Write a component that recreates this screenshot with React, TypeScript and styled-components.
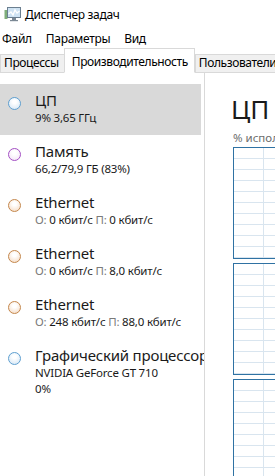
import React from 'react';
import styled, { createGlobalStyle } from 'styled-components';

const GlobalStyle = createGlobalStyle`
  html, body {
    margin: 0;
    padding: 0;
    background: #ffffff;
  }
  body {
    font-family: "Noto Sans", "Open Sans", "DejaVu Sans", sans-serif;
    color: #000;
  }
`;

const Window = styled.div`
  width: 275px;
  height: 476px;
  overflow: hidden;
  display: flex;
  flex-direction: column;
  background: #fff;
`;

const TitleBar = styled.div`
  height: 28px;
  display: flex;
  align-items: center;
  gap: 4px;
  padding-left: 4px;
  font-size: 12px;
  letter-spacing: -0.3px;
  flex-shrink: 0;
`;

const MenuBar = styled.div`
  height: 20px;
  display: flex;
  align-items: center;
  gap: 14px;
  padding-left: 2px;
  font-size: 12px;
  letter-spacing: -0.3px;
  flex-shrink: 0;
`;

const TabStrip = styled.div`
  height: 25px;
  display: flex;
  align-items: flex-end;
  border-bottom: 1px solid #d9d9d9;
  box-sizing: border-box;
  flex-shrink: 0;
  white-space: nowrap;
`;

const Tab = styled.div<{ $active?: boolean }>`
  font-size: 12px;
  letter-spacing: -0.4px;
  line-height: 15px;
  padding: ${({ $active }) => ($active ? '5px 6px 3px 7px' : '0 5px 2px 3px')};
  background: ${({ $active }) => ($active ? '#ffffff' : '#f0f0f0')};
  border: 1px solid #d9d9d9;
  border-bottom: ${({ $active }) => ($active ? '1px solid #ffffff' : 'none')};
  margin-bottom: ${({ $active }) => ($active ? '-1px' : '0')};
  margin-right: ${({ $active }) => ($active ? '0' : '-1px')};
  position: relative;
  z-index: ${({ $active }) => ($active ? 1 : 0)};
`;

const Body = styled.div`
  flex: 1;
  display: flex;
  min-height: 0;
`;

const Sidebar = styled.div`
  width: 205px;
  flex-shrink: 0;
  box-sizing: border-box;
  padding: 11px 3px 0 0;
  border-right: 1px solid #d9d9d9;
  display: flex;
  flex-direction: column;
  overflow: hidden;
`;

const Item = styled.div<{ $selected?: boolean }>`
  height: 51px;
  display: flex;
  align-items: flex-start;
  background: ${({ $selected }) => ($selected ? '#d9d9d9' : 'transparent')};
  box-sizing: border-box;
  padding: 6px 0 0 8px;
  flex-shrink: 0;
`;

const Dot = styled.div<{ $ring: string; $fill: string }>`
  width: 13px;
  height: 13px;
  border-radius: 50%;
  box-sizing: border-box;
  border: 1.5px solid ${({ $ring }) => $ring};
  background: radial-gradient(circle at 50% 35%, #ffffff 20%, ${({ $fill }) => $fill} 100%);
  margin-top: 7px;
  flex-shrink: 0;
`;

const ItemText = styled.div`
  margin-left: 14px;
  display: flex;
  flex-direction: column;
  white-space: nowrap;
`;

const ItemTitle = styled.div`
  font-size: 15px;
  letter-spacing: -0.2px;
  line-height: 20px;
  color: #1a1a1a;
`;

const ItemSub = styled.div`
  font-size: 11.5px;
  letter-spacing: -0.2px;
  line-height: 16px;
  color: #1a1a1a;
`;

const Label = styled.span`
  color: #7a7a7a;
`;

const Detail = styled.div`
  flex: 1;
  min-width: 0;
  overflow: hidden;
  padding-left: 26px;
  display: flex;
  flex-direction: column;
  white-space: nowrap;
`;

const Heading = styled.div`
  font-size: 26px;
  line-height: 32px;
  margin-top: 20px;
  color: #1a1a1a;
`;

const Caption = styled.div`
  font-size: 11.5px;
  line-height: 14px;
  color: #6d6d6d;
  margin: 6px 0 0 2px;
`;

const Graphs = styled.div`
  display: flex;
  flex-direction: column;
  gap: 4px;
  margin: 2px 0 0 2px;
`;

const Graph = styled.div`
  width: 240px;
  height: 112px;
  box-sizing: border-box;
  border: 1px solid #2f72a3;
  flex-shrink: 0;
  background-color: #fff;
  background-image:
    repeating-linear-gradient(to bottom, transparent 0 10px, #d9e5ef 10px 11px),
    repeating-linear-gradient(to right, transparent 0 29px, #d9e5ef 29px 30px);
`;

const AppIcon = () => (
  <svg width="17" height="16" viewBox="0 0 17 16">
    <rect x="0.5" y="4" width="3" height="9" fill="#7fae7a" />
    <rect x="3.5" y="1.5" width="13" height="10" fill="#cfe3f3" stroke="#6b7f90" />
    <polyline points="4.5,8 7,6 9,9 11,4 13,7 15.5,5" fill="none" stroke="#ffffff" strokeWidth="1.3" />
    <rect x="8" y="12" width="4" height="2" fill="#7b8894" />
    <rect x="6" y="14" width="8" height="1.2" fill="#7b8894" />
  </svg>
);

const blue = { ring: '#5e9fd0', fill: '#cfe3f4' };
const purple = { ring: '#a450c4', fill: '#f1e0f6' };
const orange = { ring: '#c4874c', fill: '#f4d6bc' };

export default function App() {
  return (
    <Window>
      <GlobalStyle />
      <TitleBar>
        <AppIcon />
        <span>Диспетчер задач</span>
      </TitleBar>
      <MenuBar>
        <span>Файл</span>
        <span>Параметры</span>
        <span>Вид</span>
      </MenuBar>
      <TabStrip>
        <Tab>Процессы</Tab>
        <Tab $active>Производительность</Tab>
        <Tab>Пользователи</Tab>
      </TabStrip>
      <Body>
        <Sidebar>
          <Item $selected>
            <Dot $ring={blue.ring} $fill={blue.fill} />
            <ItemText>
              <ItemTitle>ЦП</ItemTitle>
              <ItemSub>9% 3,65 ГГц</ItemSub>
            </ItemText>
          </Item>
          <Item>
            <Dot $ring={purple.ring} $fill={purple.fill} />
            <ItemText>
              <ItemTitle>Память</ItemTitle>
              <ItemSub>66,2/79,9 ГБ (83%)</ItemSub>
            </ItemText>
          </Item>
          <Item>
            <Dot $ring={orange.ring} $fill={orange.fill} />
            <ItemText>
              <ItemTitle>Ethernet</ItemTitle>
              <ItemSub><Label>О:</Label> 0 кбит/с <Label>П:</Label> 0 кбит/с</ItemSub>
            </ItemText>
          </Item>
          <Item>
            <Dot $ring={orange.ring} $fill={orange.fill} />
            <ItemText>
              <ItemTitle>Ethernet</ItemTitle>
              <ItemSub><Label>О:</Label> 0 кбит/с <Label>П:</Label> 8,0 кбит/с</ItemSub>
            </ItemText>
          </Item>
          <Item>
            <Dot $ring={orange.ring} $fill={orange.fill} />
            <ItemText>
              <ItemTitle>Ethernet</ItemTitle>
              <ItemSub><Label>О:</Label> 248 кбит/с <Label>П:</Label> 88,0 кбит/с</ItemSub>
            </ItemText>
          </Item>
          <Item>
            <Dot $ring={blue.ring} $fill={blue.fill} />
            <ItemText>
              <ItemTitle>Графический процессор 0</ItemTitle>
              <ItemSub>NVIDIA GeForce GT 710</ItemSub>
              <ItemSub>0%</ItemSub>
            </ItemText>
          </Item>
        </Sidebar>
        <Detail>
          <Heading>ЦП</Heading>
          <Caption>% использования за 60 секунд</Caption>
          <Graphs>
            <Graph />
            <Graph />
            <Graph />
          </Graphs>
        </Detail>
      </Body>
    </Window>
  );
}
